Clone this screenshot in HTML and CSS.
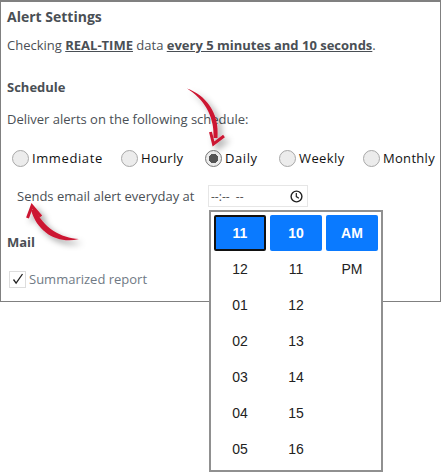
FILE: index.html
```html
<!DOCTYPE html>
<html lang="en">
<head>
    <meta charset="UTF-8">
    <meta name="viewport" content="width=device-width, initial-scale=1.0">
    <title>Alert Settings</title>
    <link rel="stylesheet" href="styles.css">
</head>
<body>
    <div class="panel">
        <h1>Alert Settings</h1>
        <p class="checking">Checking <strong>REAL-TIME</strong> data <strong>every 5 minutes and 10 seconds</strong>.</p>

        <h2 class="schedule-title">Schedule</h2>
        <p class="deliver">Deliver alerts on the following schedule:</p>

        <div class="radios">
            <label class="radio-item"><span class="radio"></span>Immediate</label>
            <label class="radio-item"><span class="radio"></span>Hourly</label>
            <label class="radio-item"><span class="radio checked"></span>Daily</label>
            <label class="radio-item"><span class="radio"></span>Weekly</label>
            <label class="radio-item"><span class="radio"></span>Monthly</label>
        </div>

        <div class="sends">
            <span class="sends-text">Sends email alert everyday at</span>
            <div class="time-input">
                <span class="time-value">--:--  --</span>
                <svg class="clock" width="13" height="13" viewBox="0 0 13 13">
                    <circle cx="6.5" cy="6.5" r="5.4" fill="none" stroke="#222" stroke-width="1.4"/>
                    <path d="M6.3 3v3.6l2.6 1.6" fill="none" stroke="#222" stroke-width="1.2"/>
                </svg>
            </div>
        </div>

        <h2 class="mail-title">Mail</h2>
        <label class="check-item">
            <span class="checkbox">
                <svg width="12" height="12" viewBox="0 0 12 12"><path d="M1.5 6.5l2.6 3.6L10.5 1" fill="none" stroke="#222" stroke-width="1.3"/></svg>
            </span>
            Summarized report
        </label>
    </div>

    <div class="picker">
        <div class="picker-col">
            <div class="cell active focused">11</div>
            <div class="cell">12</div>
            <div class="cell">01</div>
            <div class="cell">02</div>
            <div class="cell">03</div>
            <div class="cell">04</div>
            <div class="cell">05</div>
        </div>
        <div class="picker-col">
            <div class="cell active">10</div>
            <div class="cell">11</div>
            <div class="cell">12</div>
            <div class="cell">13</div>
            <div class="cell">14</div>
            <div class="cell">15</div>
            <div class="cell">16</div>
        </div>
        <div class="picker-col">
            <div class="cell active">AM</div>
            <div class="cell">PM</div>
        </div>
    </div>

    <svg class="arrow arrow-top" width="60" height="70" viewBox="0 0 60 70">
        <defs>
            <filter id="shadow" x="-40%" y="-40%" width="200%" height="200%">
                <feDropShadow dx="4" dy="4" stdDeviation="3" flood-color="#000" flood-opacity="0.38"/>
            </filter>
        </defs>
        <g filter="url(#shadow)">
            <path d="M12 8.500C30 15 45 32 42.500 58L38.500 58C40 36 28 18 12 8.500Z" fill="#cc1530"/>
            <path d="M35.500 52L38.500 64L49 56" fill="none" stroke="#cc1530" stroke-width="3"/>
        </g>
    </svg>
    <svg class="arrow arrow-bottom" width="80" height="60" viewBox="0 0 80 60">
        <g filter="url(#shadow)">
            <path d="M64 44C44 49 23 39 16 15L20 13.500C28 33 46 43 64 44Z" fill="#cc1530"/>
            <path d="M12.500 23L17 11L26 21.500" fill="none" stroke="#cc1530" stroke-width="3"/>
        </g>
    </svg>
</body>
</html>
```

FILE: styles.css
```css
html, body {
    margin: 0;
    padding: 0;
}
body {
    width: 441px;
    height: 472px;
    overflow: hidden;
    position: relative;
    background: white;
    font-family: "Open Sans", sans-serif;
    font-size: 13px;
    color: #4a4f55;
}
.panel {
    box-sizing: border-box;
    width: 441px;
    height: 302px;
    padding: 7px 6px 0;
    border: 1px solid #808080;
    border-top-width: 2px;
}
h1 {
    margin: 0;
    font-size: 14px;
    line-height: 16px;
    font-weight: 700;
}
h2 {
    margin: 0;
    font-size: 13px;
    line-height: 18px;
    font-weight: 700;
}
p {
    margin: 0;
}
.checking {
    margin-top: 11px;
    line-height: 18px;
}
.checking strong {
    text-decoration: underline;
}
.schedule-title {
    margin-top: 24px;
}
.deliver {
    margin-top: 14px;
    line-height: 18px;
}
.radios {
    display: flex;
    margin-top: 21px;
    margin-left: 5px;
    height: 18px;
    color: #111;
    letter-spacing: 0.6px;
}
.radio-item {
    display: flex;
    flex: none;
    align-items: center;
    gap: 3px;
}
.radio-item:nth-child(1) { width: 109px; }
.radio-item:nth-child(2) { width: 84px; letter-spacing: 0.3px; }
.radio-item:nth-child(3) { width: 74px; }
.radio-item:nth-child(4) { width: 84px; letter-spacing: 0.4px; }
.radio-item:nth-child(5) { letter-spacing: 0.3px; }
.radio {
    box-sizing: border-box;
    flex: none;
    width: 17px;
    height: 17px;
    border: 1px solid #a8a8a8;
    border-radius: 50%;
    background: #ececec;
}
.radio.checked {
    border: 1px solid #777;
    background: radial-gradient(circle, #555 0 4.5px, #ececec 5px);
}
.sends {
    display: flex;
    align-items: center;
    margin-top: 18px;
    margin-left: 10px;
    height: 22px;
}
.sends-text {
    width: 191px;
}
.time-input {
    box-sizing: border-box;
    width: 100px;
    height: 22px;
    padding: 0 4px 0 2px;
    display: flex;
    align-items: center;
    justify-content: space-between;
    border: 1px solid #e6e6e6;
    font-size: 12px;
    color: #555;
}
.time-value {
    white-space: pre;
}
.mail-title {
    margin-top: 26px;
}
.check-item {
    display: flex;
    align-items: center;
    gap: 3px;
    margin-top: 19px;
    margin-left: 2px;
    color: #707a85;
}
.checkbox {
    box-sizing: border-box;
    width: 17px;
    height: 17px;
    display: flex;
    align-items: center;
    justify-content: center;
    border: 1px solid #ddd;
}
.picker {
    position: absolute;
    left: 209px;
    top: 210px;
    box-sizing: border-box;
    width: 174px;
    height: 262px;
    padding: 3px 3px 0;
    display: flex;
    gap: 4px;
    background: white;
    border: 2px solid #909090;
    font-family: "Liberation Sans", Arial, sans-serif;
    font-size: 14px;
    color: #222;
}
.picker-col {
    width: 52px;
}
.cell {
    box-sizing: border-box;
    height: 36px;
    display: flex;
    align-items: center;
    justify-content: center;
}
.cell.active {
    background: #0a7aff;
    color: white;
    font-weight: 700;
    border-radius: 2px;
}
.cell.focused {
    border: 2px solid #111;
}
.arrow {
    position: absolute;
    overflow: visible;
}
.arrow-top {
    left: 175px;
    top: 80px;
}
.arrow-bottom {
    left: 15px;
    top: 195px;
}
```
